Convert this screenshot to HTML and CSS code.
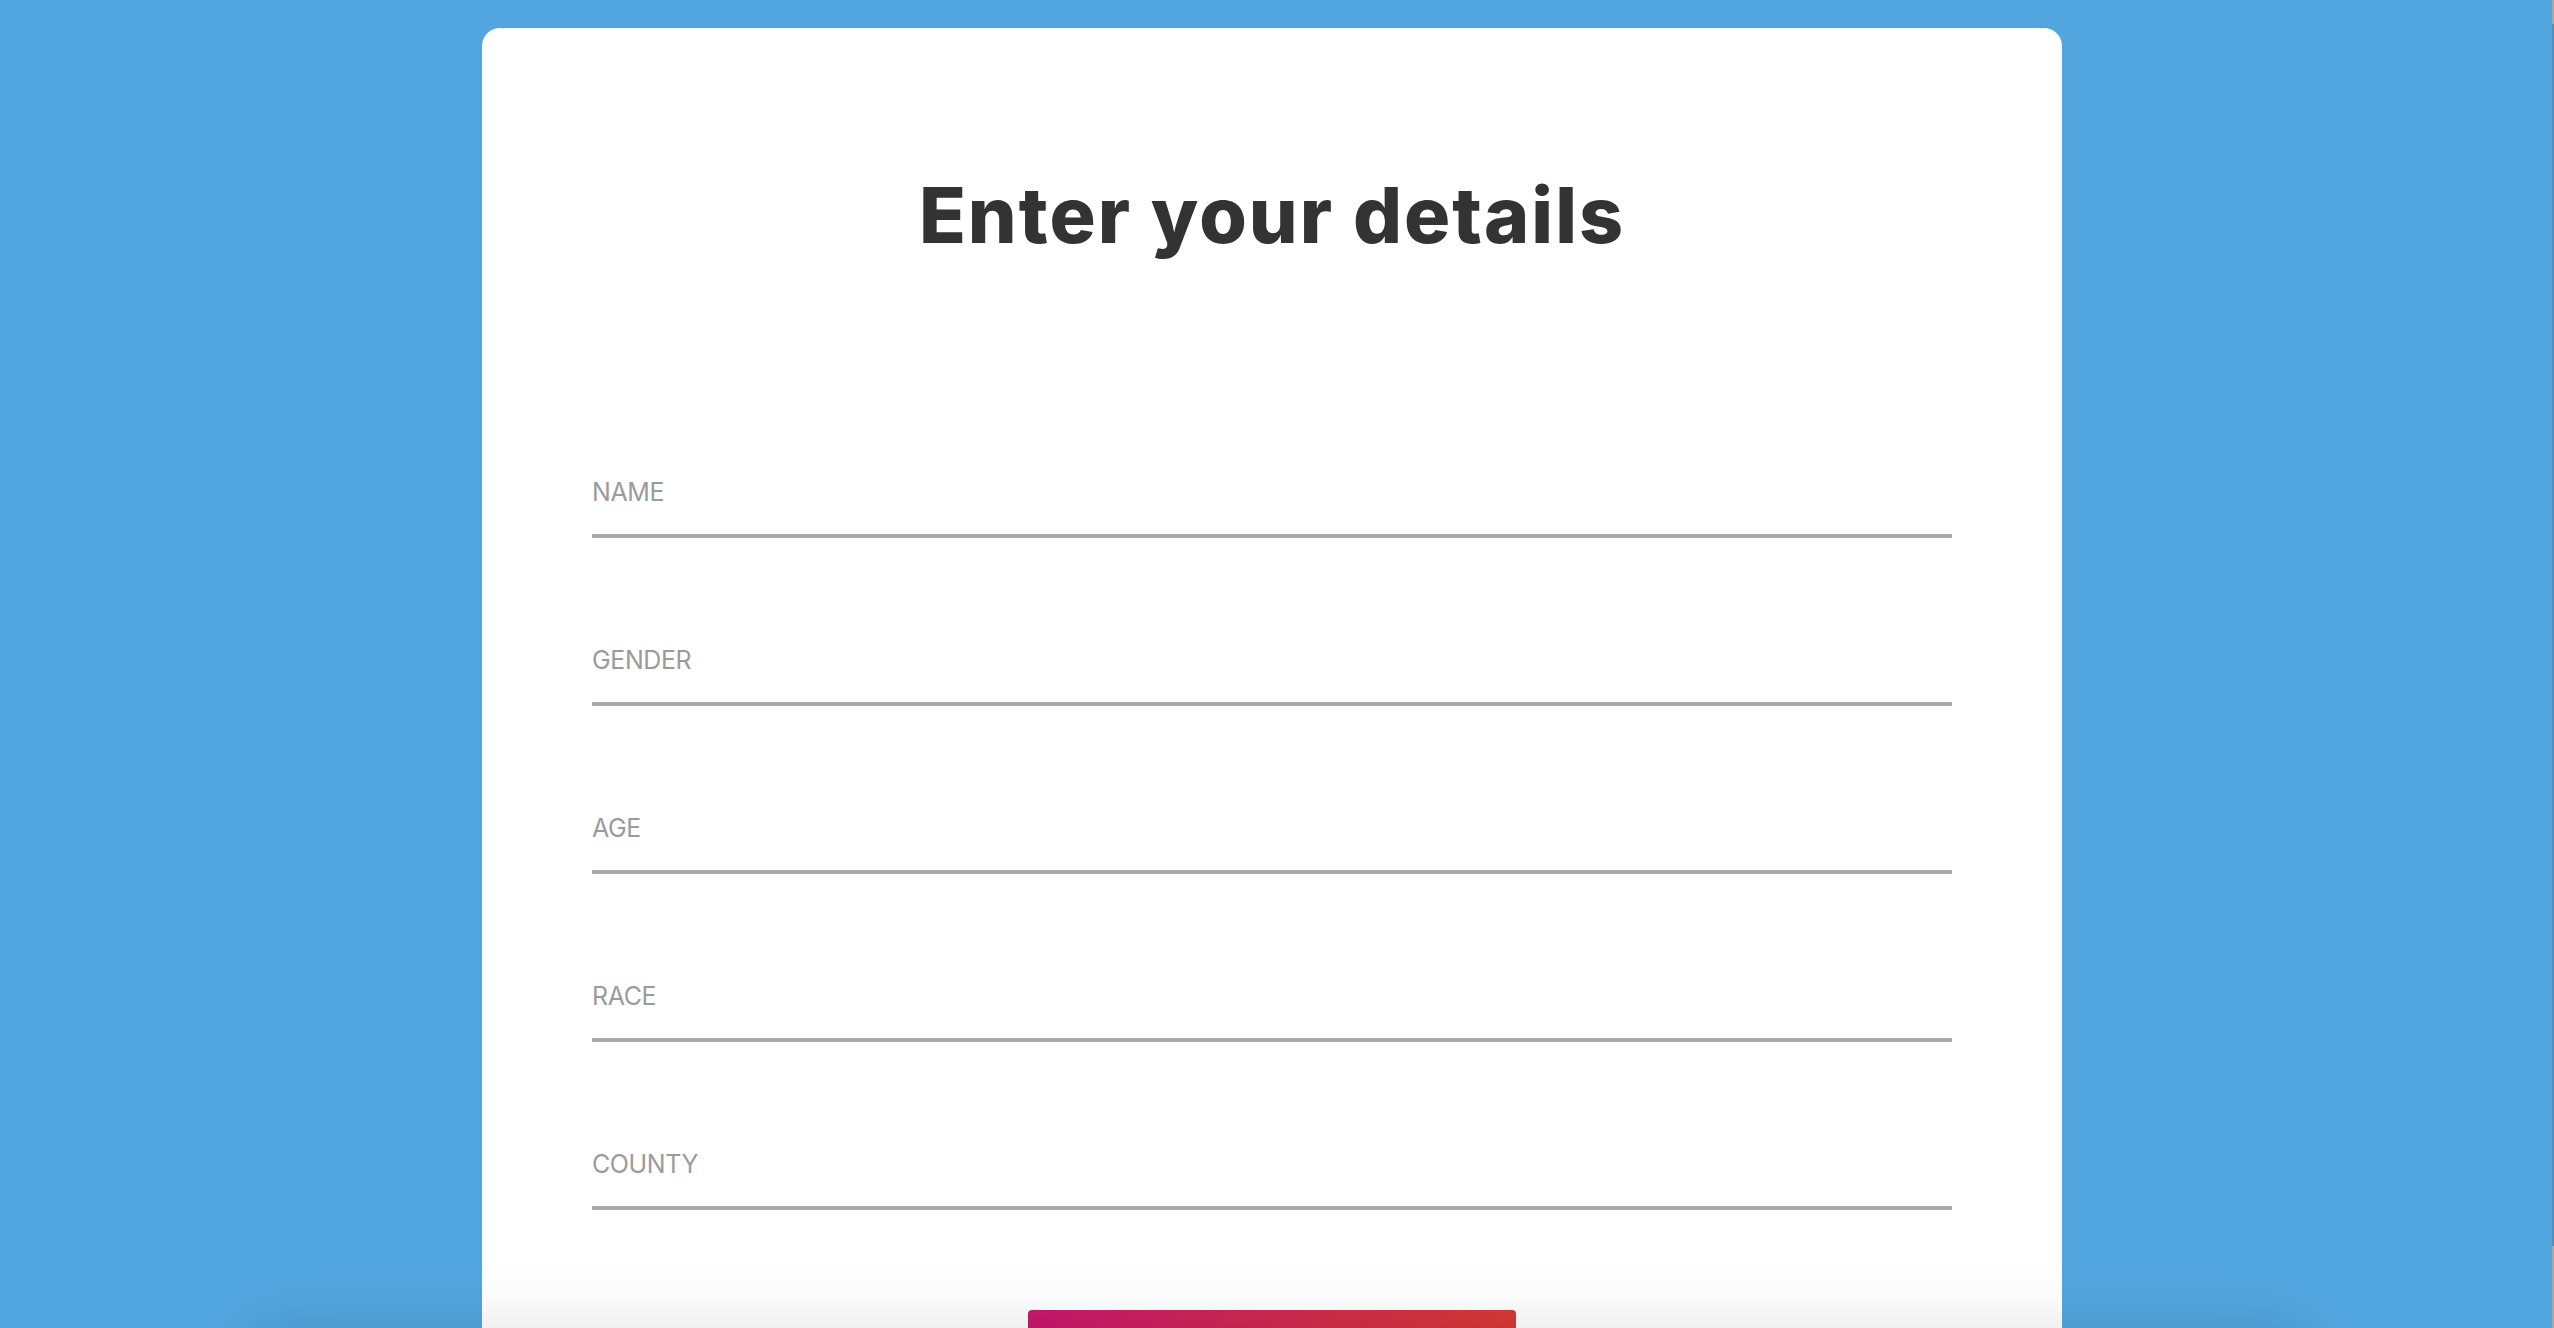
FILE: index.html
```html
<!DOCTYPE html>
<html lang="en">
<head>
<meta charset="utf-8">
<title>Enter your details</title>
<link rel="stylesheet" href="styles.css">
</head>
<body>
<main class="card">
  <h1 class="title">Enter your details</h1>
  <form class="form">
    <input class="field" type="text" placeholder="NAME">
    <input class="field" type="text" placeholder="GENDER">
    <input class="field" type="text" placeholder="AGE">
    <input class="field" type="text" placeholder="RACE">
    <input class="field" type="text" placeholder="COUNTY">
    <button class="submit" type="button">Submit</button>
  </form>
</main>
<div class="shade"></div>
<div class="edge"></div>
</body>
</html>
```

FILE: styles.css
```css
html, body {
  margin: 0;
  padding: 0;
}
body {
  background: #52a6df;
  font-family: "Inter", "Liberation Sans", sans-serif;
  position: relative;
  min-height: 1328px;
  padding-right: 10px;
  overflow: hidden;
}
.card {
  width: 1580px;
  margin: 28px auto 0;
  box-sizing: border-box;
  padding: 142px 110px 200px;
  background: #ffffff;
  border-radius: 18px;
}
.title {
  margin: 0 0 215px;
  text-align: center;
  font-family: "Inter", "Liberation Sans", sans-serif;
  font-weight: 800;
  font-size: 77px;
  line-height: 91px;
  letter-spacing: 2px;
  color: #333333;
}
.form {
  display: flex;
  flex-direction: column;
  align-items: center;
}
.field {
  display: block;
  width: 100%;
  box-sizing: border-box;
  height: 62px;
  margin: 0 0 106px;
  padding: 0 0 26px;
  border: none;
  border-bottom: 4px solid #ababab;
  outline: none;
  background: transparent;
  font-family: "Inter", "Liberation Sans", sans-serif;
  font-size: 25px;
  line-height: 32px;
  letter-spacing: -0.4px;
  color: #333;
}
.field:last-of-type {
  margin-bottom: 100px;
}
.field::placeholder {
  color: #9b9b9b;
  opacity: 1;
}
.submit {
  width: 488px;
  height: 120px;
  border: none;
  border-radius: 4px;
  background: linear-gradient(90deg, #c8186e 0%, #d83a35 100%);
  color: #fff;
  font-family: "Inter", "Liberation Sans", sans-serif;
  font-size: 28px;
  font-weight: 600;
}
.shade {
  position: absolute;
  top: 1340px;
  left: 250px;
  width: 2054px;
  height: 200px;
  box-shadow: 0 0 80px 0 rgba(0, 0, 0, 0.16);
  pointer-events: none;
}
.edge {
  position: fixed;
  top: 0;
  right: 0;
  bottom: 0;
  width: 2px;
  background: linear-gradient(180deg, #a7a9a9 0, #a7a9a9 24px, #5b8db2 24px, #5b8db2 1246px, #a7a9a9 1246px);
}
```
